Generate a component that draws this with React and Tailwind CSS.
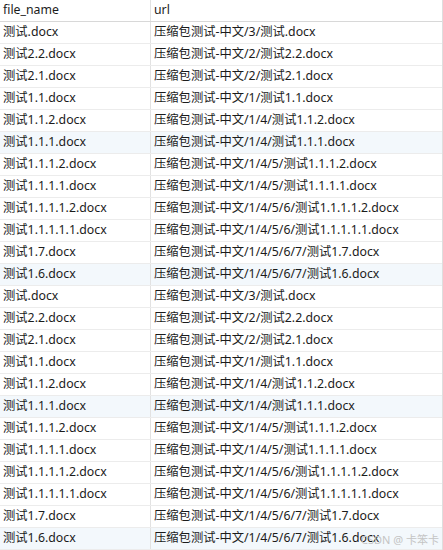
const base = [
  ['测试.docx', '压缩包测试-中文/3/测试.docx'],
  ['测试2.2.docx', '压缩包测试-中文/2/测试2.2.docx'],
  ['测试2.1.docx', '压缩包测试-中文/2/测试2.1.docx'],
  ['测试1.1.docx', '压缩包测试-中文/1/测试1.1.docx'],
  ['测试1.1.2.docx', '压缩包测试-中文/1/4/测试1.1.2.docx'],
  ['测试1.1.1.docx', '压缩包测试-中文/1/4/测试1.1.1.docx'],
  ['测试1.1.1.2.docx', '压缩包测试-中文/1/4/5/测试1.1.1.2.docx'],
  ['测试1.1.1.1.docx', '压缩包测试-中文/1/4/5/测试1.1.1.1.docx'],
  ['测试1.1.1.1.2.docx', '压缩包测试-中文/1/4/5/6/测试1.1.1.1.2.docx'],
  ['测试1.1.1.1.1.docx', '压缩包测试-中文/1/4/5/6/测试1.1.1.1.1.docx'],
  ['测试1.7.docx', '压缩包测试-中文/1/4/5/6/7/测试1.7.docx'],
  ['测试1.6.docx', '压缩包测试-中文/1/4/5/6/7/测试1.6.docx'],
]

const rows = [...base, ...base]

export default function App() {
  return (
    <div
      className="relative w-[443px] h-[550px] overflow-hidden bg-white text-[12.3px] text-[#1b1b1b]"
      style={{ fontFamily: '"Noto Sans", "Noto Sans CJK SC", sans-serif' }}
    >
      <div className="w-[443px] border-r border-[#dedede]">
        {/* header */}
        <div className="flex h-[22px] border-b border-[#d8d8d8]">
          <div className="w-[151px] shrink-0 pl-[3px] leading-[20px] border-r border-[#e2e2e2]">file_name</div>
          <div className="flex-1 pl-[3px] leading-[20px]">url</div>
        </div>

        {rows.map(([name, url], i) => (
          <div
            key={i}
            className={`flex h-[22px] border-b border-[#ececec] ${i % 6 === 5 ? 'bg-[#f3f8fc]' : 'bg-white'}`}
          >
            <div className="w-[151px] shrink-0 pl-[3px] leading-[20px] whitespace-nowrap border-r border-[#e2e2e2]">{name}</div>
            <div className="flex-1 pl-[3px] leading-[20px] whitespace-nowrap">{url}</div>
          </div>
        ))}
      </div>

      {/* watermark */}
      <div className="absolute right-[4px] bottom-[5px] text-[11px] text-[#c4c4c4] leading-none">
        CSDN @ 卡笨卡
      </div>
    </div>
  )
}
